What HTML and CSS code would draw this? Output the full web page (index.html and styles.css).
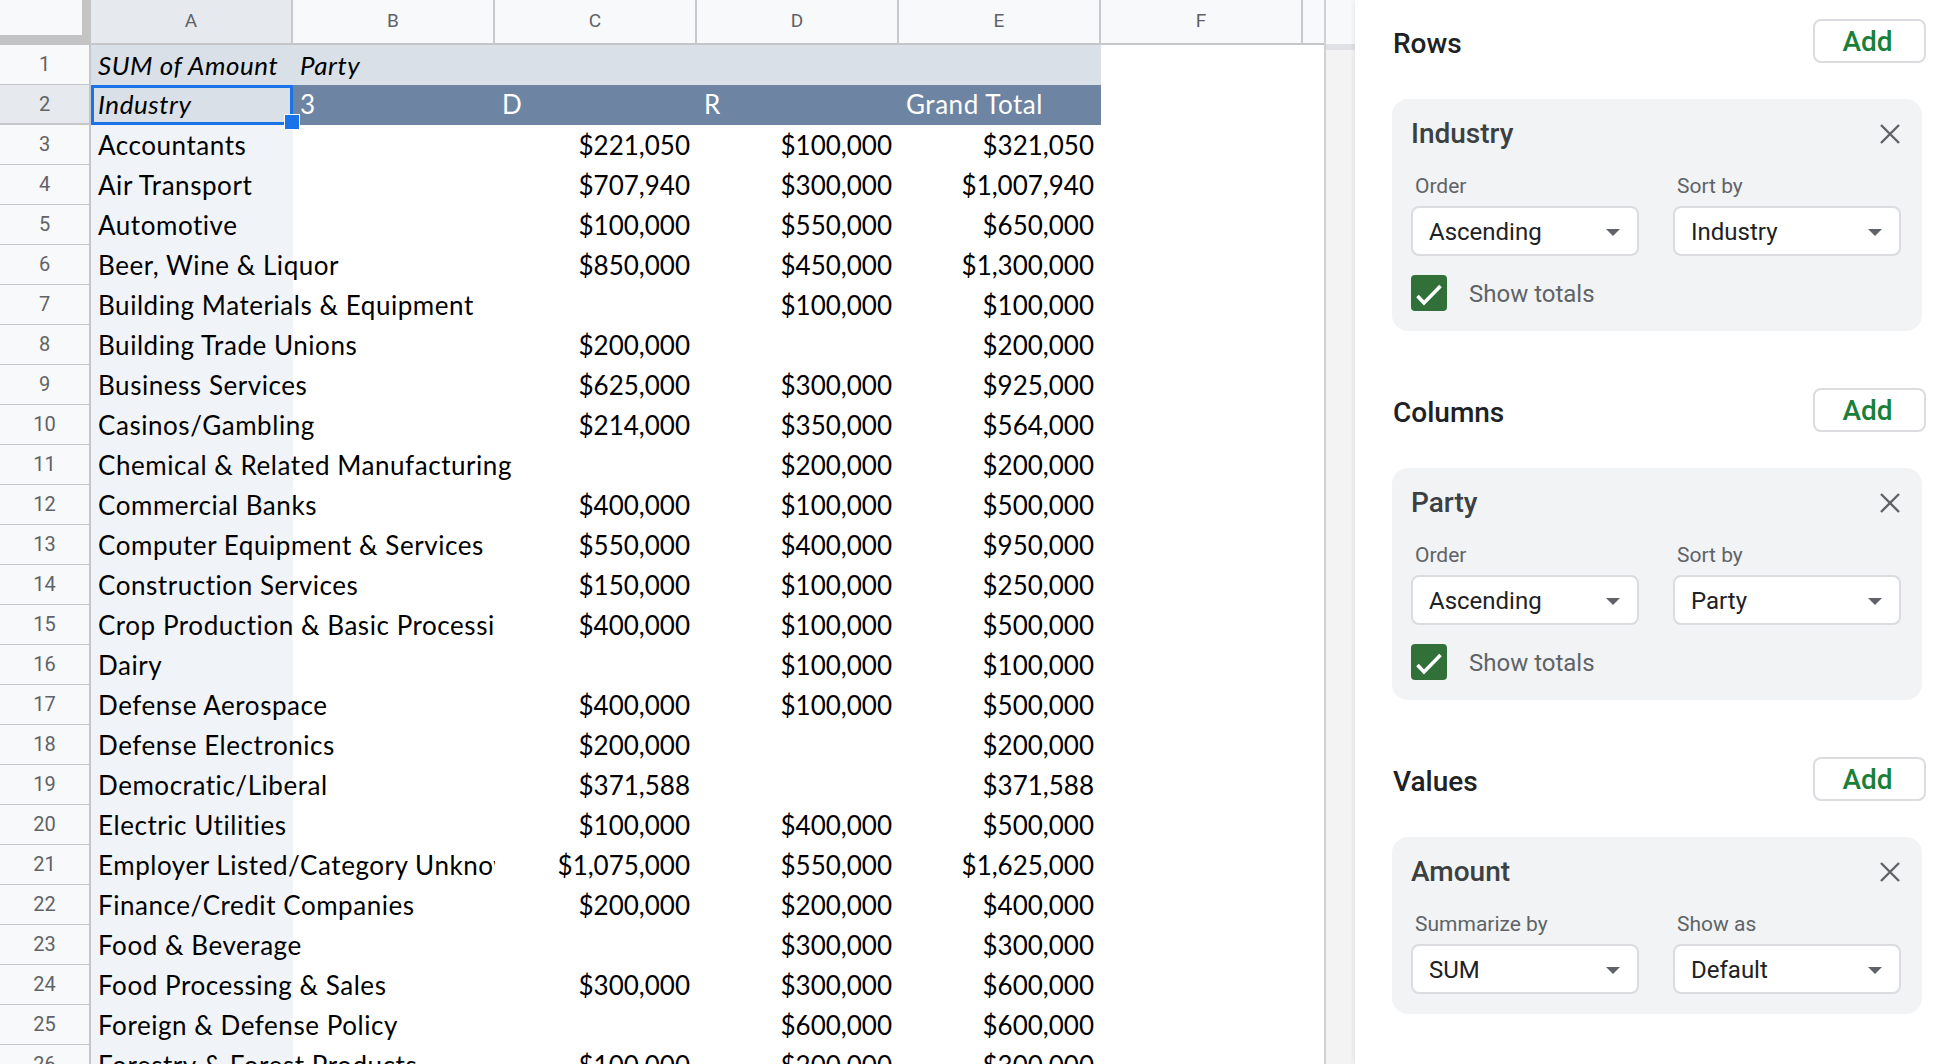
FILE: index.html
```html
<!DOCTYPE html>
<html lang="en">
<head>
<meta charset="utf-8">
<title>Pivot table</title>
<link rel="stylesheet" href="styles.css">
</head>
<body>
<div class="sheet">
  <div class="colhead">
    <div class="corner"><div class="corner-in"></div></div>
    <div class="ch sel">A</div>
    <div class="ch">B</div>
    <div class="ch">C</div>
    <div class="ch">D</div>
    <div class="ch">E</div>
    <div class="ch">F</div>
    <div class="ch last"></div>
  </div>

  <div class="row">
    <div class="rh">1</div>
    <div class="c band it">SUM of Amount</div>
    <div class="c band it">Party</div>
    <div class="c band"></div>
    <div class="c band"></div>
    <div class="c band"></div>
    <div class="c"></div>
    <div class="c"></div>
  </div>
  <div class="row">
    <div class="rh selrow">2</div>
    <div class="c band it selcell">Industry</div>
    <div class="c dark">3</div>
    <div class="c dark">D</div>
    <div class="c dark">R</div>
    <div class="c dark">Grand Total</div>
    <div class="c"></div>
    <div class="c"></div>
  </div>

  <div class="row"><div class="rh">3</div><div class="c a">Accountants</div><div class="c"></div><div class="c n">$221,050</div><div class="c n">$100,000</div><div class="c n">$321,050</div><div class="c"></div><div class="c"></div></div>
  <div class="row"><div class="rh">4</div><div class="c a">Air Transport</div><div class="c"></div><div class="c n">$707,940</div><div class="c n">$300,000</div><div class="c n">$1,007,940</div><div class="c"></div><div class="c"></div></div>
  <div class="row"><div class="rh">5</div><div class="c a">Automotive</div><div class="c"></div><div class="c n">$100,000</div><div class="c n">$550,000</div><div class="c n">$650,000</div><div class="c"></div><div class="c"></div></div>
  <div class="row"><div class="rh">6</div><div class="c a">Beer, Wine &amp; Liquor</div><div class="c"></div><div class="c n">$850,000</div><div class="c n">$450,000</div><div class="c n">$1,300,000</div><div class="c"></div><div class="c"></div></div>
  <div class="row"><div class="rh">7</div><div class="c a">Building Materials &amp; Equipment</div><div class="c"></div><div class="c n"></div><div class="c n">$100,000</div><div class="c n">$100,000</div><div class="c"></div><div class="c"></div></div>
  <div class="row"><div class="rh">8</div><div class="c a">Building Trade Unions</div><div class="c"></div><div class="c n">$200,000</div><div class="c n"></div><div class="c n">$200,000</div><div class="c"></div><div class="c"></div></div>
  <div class="row"><div class="rh">9</div><div class="c a">Business Services</div><div class="c"></div><div class="c n">$625,000</div><div class="c n">$300,000</div><div class="c n">$925,000</div><div class="c"></div><div class="c"></div></div>
  <div class="row"><div class="rh">10</div><div class="c a">Casinos/Gambling</div><div class="c"></div><div class="c n">$214,000</div><div class="c n">$350,000</div><div class="c n">$564,000</div><div class="c"></div><div class="c"></div></div>
  <div class="row"><div class="rh">11</div><div class="c a">Chemical &amp; Related Manufacturing</div><div class="c"></div><div class="c n"></div><div class="c n">$200,000</div><div class="c n">$200,000</div><div class="c"></div><div class="c"></div></div>
  <div class="row"><div class="rh">12</div><div class="c a">Commercial Banks</div><div class="c"></div><div class="c n">$400,000</div><div class="c n">$100,000</div><div class="c n">$500,000</div><div class="c"></div><div class="c"></div></div>
  <div class="row"><div class="rh">13</div><div class="c a">Computer Equipment &amp; Services</div><div class="c"></div><div class="c n">$550,000</div><div class="c n">$400,000</div><div class="c n">$950,000</div><div class="c"></div><div class="c"></div></div>
  <div class="row"><div class="rh">14</div><div class="c a">Construction Services</div><div class="c"></div><div class="c n">$150,000</div><div class="c n">$100,000</div><div class="c n">$250,000</div><div class="c"></div><div class="c"></div></div>
  <div class="row"><div class="rh">15</div><div class="c a"><span class="clip">Crop Production &amp; Basic Processing</span></div><div class="c"></div><div class="c n">$400,000</div><div class="c n">$100,000</div><div class="c n">$500,000</div><div class="c"></div><div class="c"></div></div>
  <div class="row"><div class="rh">16</div><div class="c a">Dairy</div><div class="c"></div><div class="c n"></div><div class="c n">$100,000</div><div class="c n">$100,000</div><div class="c"></div><div class="c"></div></div>
  <div class="row"><div class="rh">17</div><div class="c a">Defense Aerospace</div><div class="c"></div><div class="c n">$400,000</div><div class="c n">$100,000</div><div class="c n">$500,000</div><div class="c"></div><div class="c"></div></div>
  <div class="row"><div class="rh">18</div><div class="c a">Defense Electronics</div><div class="c"></div><div class="c n">$200,000</div><div class="c n"></div><div class="c n">$200,000</div><div class="c"></div><div class="c"></div></div>
  <div class="row"><div class="rh">19</div><div class="c a">Democratic/Liberal</div><div class="c"></div><div class="c n">$371,588</div><div class="c n"></div><div class="c n">$371,588</div><div class="c"></div><div class="c"></div></div>
  <div class="row"><div class="rh">20</div><div class="c a">Electric Utilities</div><div class="c"></div><div class="c n">$100,000</div><div class="c n">$400,000</div><div class="c n">$500,000</div><div class="c"></div><div class="c"></div></div>
  <div class="row"><div class="rh">21</div><div class="c a"><span class="clip">Employer Listed/Category Unknown</span></div><div class="c"></div><div class="c n">$1,075,000</div><div class="c n">$550,000</div><div class="c n">$1,625,000</div><div class="c"></div><div class="c"></div></div>
  <div class="row"><div class="rh">22</div><div class="c a">Finance/Credit Companies</div><div class="c"></div><div class="c n">$200,000</div><div class="c n">$200,000</div><div class="c n">$400,000</div><div class="c"></div><div class="c"></div></div>
  <div class="row"><div class="rh">23</div><div class="c a">Food &amp; Beverage</div><div class="c"></div><div class="c n"></div><div class="c n">$300,000</div><div class="c n">$300,000</div><div class="c"></div><div class="c"></div></div>
  <div class="row"><div class="rh">24</div><div class="c a">Food Processing &amp; Sales</div><div class="c"></div><div class="c n">$300,000</div><div class="c n">$300,000</div><div class="c n">$600,000</div><div class="c"></div><div class="c"></div></div>
  <div class="row"><div class="rh">25</div><div class="c a">Foreign &amp; Defense Policy</div><div class="c"></div><div class="c n"></div><div class="c n">$600,000</div><div class="c n">$600,000</div><div class="c"></div><div class="c"></div></div>
  <div class="row"><div class="rh">26</div><div class="c a">Forestry &amp; Forest Products</div><div class="c"></div><div class="c n">$100,000</div><div class="c n">$200,000</div><div class="c n">$300,000</div><div class="c"></div><div class="c"></div></div>
</div>

<div class="vscroll"></div>

<div class="panel">
  <section class="sec">
    <div class="sec-head">
      <h2>Rows</h2>
      <button class="add">Add</button>
    </div>
    <div class="card">
      <div class="card-head">
        <span class="card-title">Industry</span>
        <svg class="close" width="22" height="22" viewBox="0 0 22 22"><path d="M2 2L20 20M20 2L2 20" stroke="#5f6368" stroke-width="2.4" fill="none"/></svg>
      </div>
      <div class="fields">
        <div class="field">
          <div class="label">Order</div>
          <div class="select"><span>Ascending</span><svg width="14" height="7" viewBox="0 0 14 7"><polygon points="0,0 14,0 7,7" fill="#5f6368"/></svg></div>
        </div>
        <div class="field">
          <div class="label">Sort by</div>
          <div class="select"><span>Industry</span><svg width="14" height="7" viewBox="0 0 14 7"><polygon points="0,0 14,0 7,7" fill="#5f6368"/></svg></div>
        </div>
      </div>
      <div class="check-row">
        <span class="checkbox"><svg width="36" height="36" viewBox="0 0 36 36"><polyline points="6.5,21 13,28 29.5,11" fill="none" stroke="#fff" stroke-width="3.6"/></svg></span>
        <span class="check-label">Show totals</span>
      </div>
    </div>
  </section>

  <section class="sec">
    <div class="sec-head">
      <h2>Columns</h2>
      <button class="add">Add</button>
    </div>
    <div class="card">
      <div class="card-head">
        <span class="card-title">Party</span>
        <svg class="close" width="22" height="22" viewBox="0 0 22 22"><path d="M2 2L20 20M20 2L2 20" stroke="#5f6368" stroke-width="2.4" fill="none"/></svg>
      </div>
      <div class="fields">
        <div class="field">
          <div class="label">Order</div>
          <div class="select"><span>Ascending</span><svg width="14" height="7" viewBox="0 0 14 7"><polygon points="0,0 14,0 7,7" fill="#5f6368"/></svg></div>
        </div>
        <div class="field">
          <div class="label">Sort by</div>
          <div class="select"><span>Party</span><svg width="14" height="7" viewBox="0 0 14 7"><polygon points="0,0 14,0 7,7" fill="#5f6368"/></svg></div>
        </div>
      </div>
      <div class="check-row">
        <span class="checkbox"><svg width="36" height="36" viewBox="0 0 36 36"><polyline points="6.5,21 13,28 29.5,11" fill="none" stroke="#fff" stroke-width="3.6"/></svg></span>
        <span class="check-label">Show totals</span>
      </div>
    </div>
  </section>

  <section class="sec">
    <div class="sec-head">
      <h2>Values</h2>
      <button class="add">Add</button>
    </div>
    <div class="card">
      <div class="card-head">
        <span class="card-title">Amount</span>
        <svg class="close" width="22" height="22" viewBox="0 0 22 22"><path d="M2 2L20 20M20 2L2 20" stroke="#5f6368" stroke-width="2.4" fill="none"/></svg>
      </div>
      <div class="fields">
        <div class="field">
          <div class="label">Summarize by</div>
          <div class="select"><span>SUM</span><svg width="14" height="7" viewBox="0 0 14 7"><polygon points="0,0 14,0 7,7" fill="#5f6368"/></svg></div>
        </div>
        <div class="field">
          <div class="label">Show as</div>
          <div class="select"><span>Default</span><svg width="14" height="7" viewBox="0 0 14 7"><polygon points="0,0 14,0 7,7" fill="#5f6368"/></svg></div>
        </div>
      </div>
    </div>
  </section>
</div>
</body>
</html>
```

FILE: styles.css
```css
* { box-sizing: border-box; }

html, body {
  margin: 0;
  padding: 0;
}

body {
  width: 1948px;
  height: 1064px;
  overflow: hidden;
  display: flex;
  background: #fff;
  font-family: Roboto, "Liberation Sans", Arial, sans-serif;
}

/* ---------- sheet ---------- */
.sheet {
  width: 1324px;
  flex: none;
  overflow: hidden;
  background: #fff;
}

.colhead,
.row {
  display: grid;
  grid-template-columns: 91px repeat(6, 202px) 21px;
}

.colhead {
  height: 45px;
}

.corner {
  background: #c4c4c4;
}

.corner-in {
  width: 82px;
  height: 35px;
  background: #f8f9fa;
}

.ch {
  background: #f8f9fa;
  border-right: 2px solid #c7c9cc;
  border-bottom: 2px solid #c4c6c9;
  color: #5f6368;
  font-family: Roboto, sans-serif;
  font-size: 19px;
  line-height: 42px;
  text-align: center;
}

.ch.sel {
  background: #e6e9ed;
}

.ch.last {
  border-right: none;
}

.row {
  height: 40px;
}

.rh {
  background: #f8f9fa;
  border-right: 2px solid #c4c6c9;
  border-bottom: 2px solid #c4c6c9;
  color: #5f6368;
  font-family: Roboto, sans-serif;
  font-size: 20px;
  line-height: 38px;
  text-align: center;
}

.rh.selrow {
  background: #e6e9ed;
}

.c {
  font-family: Lato, "Liberation Sans", sans-serif;
  font-size: 26px;
  line-height: 41px;
  letter-spacing: 0.55px;
  color: #000;
  padding: 0 7px;
  white-space: nowrap;
  overflow: visible;
}

.c.a {
  background: #f0f4f8;
}

.c.n {
  text-align: right;
  letter-spacing: 0;
}

.c.it {
  font-style: italic;
}

.c.band {
  background: #d9e0e8;
}

.c.dark {
  background: #6e84a3;
  color: #fff;
  line-height: 38px;
}

.clip {
  display: inline-block;
  max-width: 397px;
  overflow: hidden;
  vertical-align: top;
}

.selcell {
  position: relative;
  line-height: 38px;
  box-shadow: inset 0 0 0 3px #1a73e8;
}

.selcell::after {
  content: "";
  position: absolute;
  right: -7px;
  bottom: -5px;
  width: 14px;
  height: 14px;
  background: #1a73e8;
  border: 1px solid #fff;
}

/* ---------- scroll strip ---------- */
.vscroll {
  width: 31px;
  flex: none;
  border-left: 2px solid #cfd1d4;
  background: linear-gradient(#f8f9fa 0 44px, #dfe1e4 44px 50px, #f3f3f4 50px);
}

/* ---------- panel ---------- */
.panel {
  flex: 1;
  background: #fff;
  padding: 19px 25px 0 37px;
  box-shadow: -2px 0 4px rgba(0, 0, 0, 0.06);
}

.sec {
  margin-bottom: 57px;
}

.sec-head {
  display: flex;
  justify-content: space-between;
  align-items: center;
  height: 44px;
}

.sec-head h2 {
  margin: 0;
  padding: 5px 0 0 1px;
  font-family: Roboto, sans-serif;
  font-weight: 500;
  font-size: 28px;
  color: #202124;
}

.add {
  width: 113px;
  height: 44px;
  border: 2px solid #dadce0;
  border-radius: 8px;
  background: #fff;
  color: #188038;
  font-family: Roboto, sans-serif;
  font-weight: 500;
  font-size: 28px;
  padding: 0 4px 0 0;
}

.card {
  margin-top: 36px;
  margin-right: 4px;
  background: #f1f3f4;
  border-radius: 16px;
  padding: 18px 21px 20px 19px;
}

.card-head {
  display: flex;
  justify-content: space-between;
  align-items: center;
  height: 34px;
}

.card-title {
  font-weight: 500;
  font-size: 28px;
  line-height: 34px;
  color: #3c4043;
}

.fields {
  display: grid;
  grid-template-columns: 228px 228px;
  column-gap: 34px;
  margin-top: 22px;
}

.label {
  font-size: 21px;
  line-height: 26px;
  color: #5f6368;
  padding-left: 4px;
  margin-bottom: 7px;
}

.select {
  height: 50px;
  border: 2px solid #dadce0;
  border-radius: 8px;
  background: #fff;
  display: flex;
  justify-content: space-between;
  align-items: center;
  padding: 2px 17px 0 16px;
  font-size: 24px;
  color: #202124;
}

.check-row {
  display: flex;
  align-items: center;
  margin-top: 19px;
}

.checkbox {
  width: 36px;
  height: 36px;
  border-radius: 4px;
  background: #327039;
  display: flex;
}

.check-label {
  margin-left: 22px;
  padding-top: 2px;
  font-size: 24px;
  color: #5f6368;
}
```
